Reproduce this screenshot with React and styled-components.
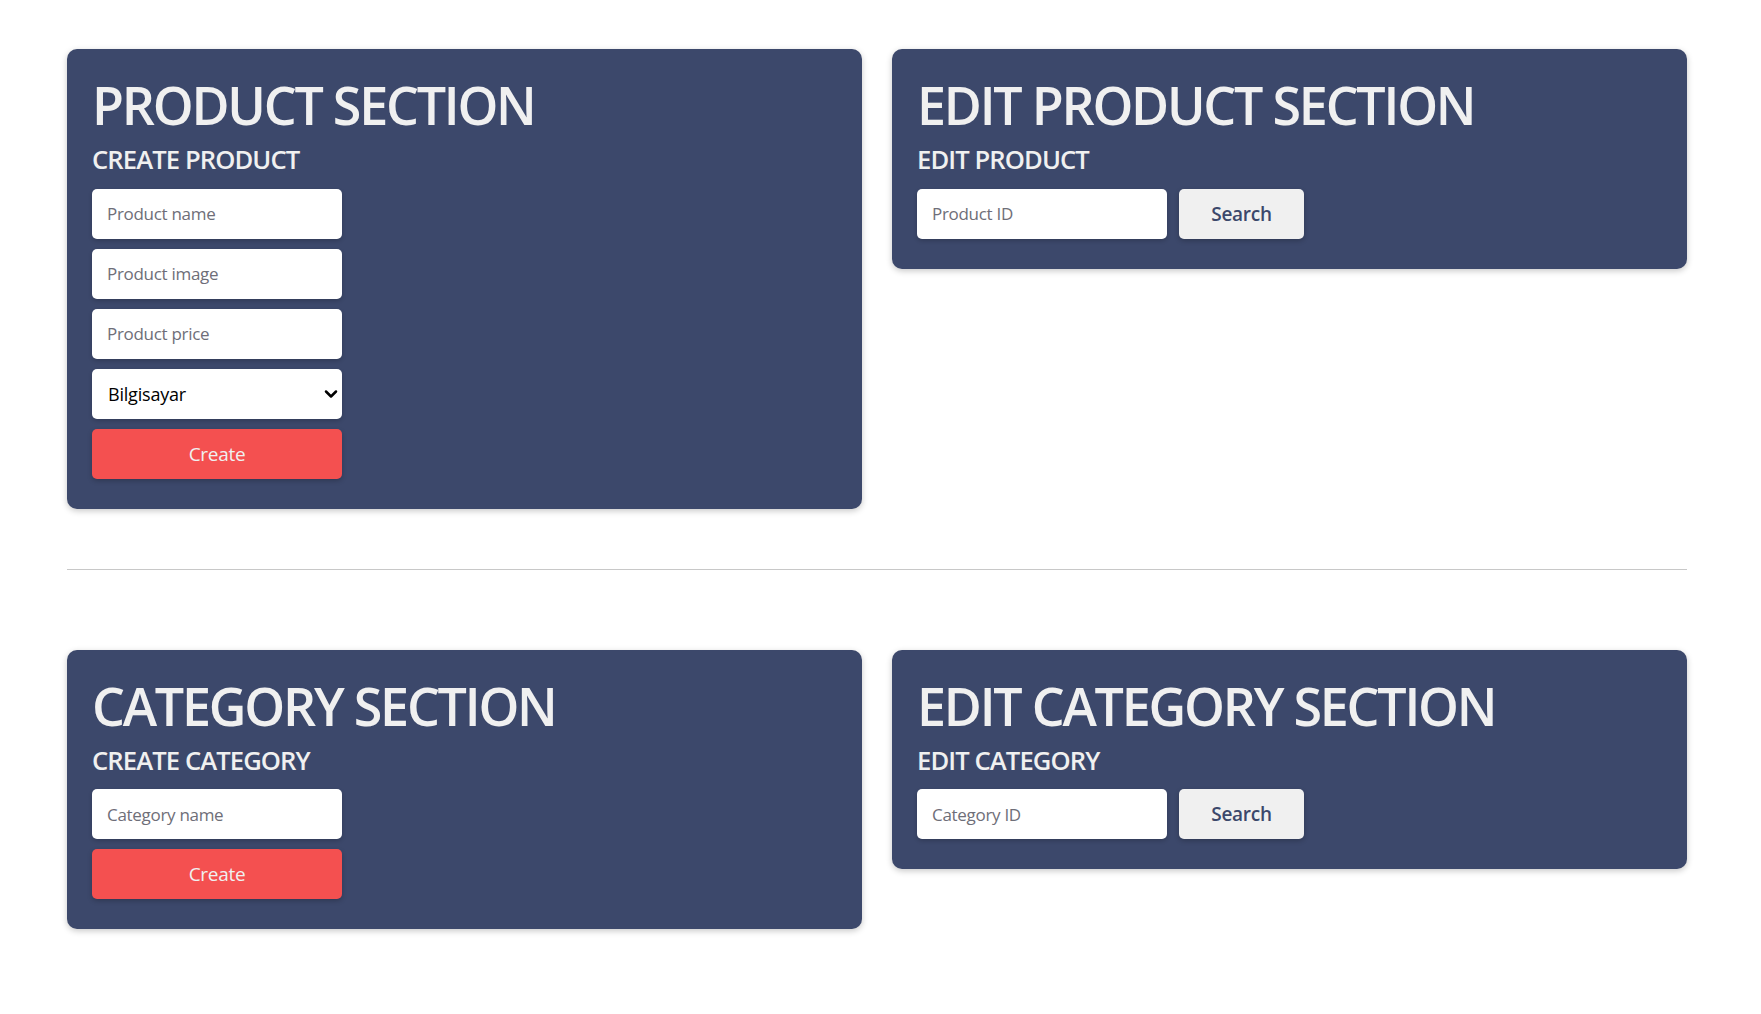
import React, { useState } from "react";
import styled, { createGlobalStyle } from "styled-components";
import { ChevronDown } from "lucide-react";

const GlobalStyle = createGlobalStyle`
  body {
    margin: 0;
    background: #ffffff;
    font-family: "Open Sans", "Noto Sans", sans-serif;
  }
`;

const Page = styled.div`
  padding: 49px 74px 60px 67px;
`;

const SectionRow = styled.div`
  display: grid;
  grid-template-columns: 1fr 1fr;
  gap: 30px;
  align-items: start;
`;

const Divider = styled.hr`
  border: none;
  border-top: 1px solid #c8c8c8;
  margin: 60px 0 80px;
`;

const Card = styled.div`
  background: #3c486b;
  border-radius: 10px;
  padding: 30px 25px 30px;
  box-shadow: 0 2px 6px rgba(0, 0, 0, 0.22);
`;

const Title = styled.h1`
  margin: 0 0 16px;
  font-size: 52px;
  line-height: 52px;
  font-weight: 600;
  letter-spacing: -0.043em;
  color: #f0f0f0;
`;

const SubTitle = styled.h2`
  margin: 0 0 16px;
  font-size: 25.6px;
  line-height: 25.6px;
  font-weight: 600;
  letter-spacing: -0.035em;
  color: #f0f0f0;
`;

const Stack = styled.div`
  display: flex;
  flex-direction: column;
  gap: 10px;
  width: 250px;
`;

const Inline = styled.div`
  display: flex;
  gap: 12px;
`;

const Input = styled.input`
  box-sizing: border-box;
  width: 250px;
  height: 50px;
  border: none;
  border-radius: 5px;
  padding: 0 15px;
  background: #ffffff;
  font-family: inherit;
  font-size: 17px;
  letter-spacing: -0.3px;
  color: #222;
  outline: none;
  box-shadow: 0 2px 4px rgba(0, 0, 0, 0.18);

  &::placeholder {
    color: #6e6e78;
  }
`;

const SelectWrap = styled.div`
  position: relative;
  width: 250px;
  height: 50px;
`;

const Select = styled.select`
  appearance: none;
  box-sizing: border-box;
  width: 100%;
  height: 100%;
  border: none;
  border-radius: 5px;
  padding: 0 30px 0 16px;
  background: #ffffff;
  font-family: inherit;
  font-size: 18px;
  letter-spacing: -0.2px;
  color: #000;
  outline: none;
  box-shadow: 0 2px 4px rgba(0, 0, 0, 0.18);
`;

const Chevron = styled(ChevronDown)`
  position: absolute;
  right: 1px;
  top: 15px;
  pointer-events: none;
  color: #000;
`;

const Button = styled.button`
  box-sizing: border-box;
  height: 50px;
  width: ${(p) => (p.$wide ? "250px" : "125px")};
  border: none;
  border-radius: 5px;
  background: ${(p) => (p.$variant === "danger" ? "#f45050" : "#f0f0f0")};
  color: ${(p) => (p.$variant === "danger" ? "#f0f0f0" : "#3c486b")};
  font-family: inherit;
  font-size: 19px;
  font-weight: ${(p) => (p.$variant === "danger" ? 400 : 600)};
  letter-spacing: -0.3px;
  cursor: pointer;
  box-shadow: 0 2px 5px rgba(0, 0, 0, 0.22);
`;

const CreateProduct = () => {
  const [category, setCategory] = useState("Bilgisayar");
  return (
    <Card>
      <Title>PRODUCT SECTION</Title>
      <SubTitle>CREATE PRODUCT</SubTitle>
      <Stack>
        <Input type="text" placeholder="Product name" />
        <Input type="text" placeholder="Product image" />
        <Input type="text" placeholder="Product price" />
        <SelectWrap>
          <Select value={category} onChange={(e) => setCategory(e.target.value)}>
            <option>Bilgisayar</option>
            <option>Telefon</option>
            <option>Tablet</option>
          </Select>
          <Chevron size={20} strokeWidth={3} />
        </SelectWrap>
        <Button $variant="danger" $wide>Create</Button>
      </Stack>
    </Card>
  );
};

const EditCard = ({ title, subtitle, placeholder }) => (
  <Card>
    <Title>{title}</Title>
    <SubTitle>{subtitle}</SubTitle>
    <Inline>
      <Input type="text" placeholder={placeholder} />
      <Button>Search</Button>
    </Inline>
  </Card>
);

const CreateCategory = () => (
  <Card>
    <Title>CATEGORY SECTION</Title>
    <SubTitle>CREATE CATEGORY</SubTitle>
    <Stack>
      <Input type="text" placeholder="Category name" />
      <Button $variant="danger" $wide>Create</Button>
    </Stack>
  </Card>
);

export default function App() {
  return (
    <>
      <GlobalStyle />
      <Page>
        <SectionRow>
          <CreateProduct />
          <EditCard title="EDIT PRODUCT SECTION" subtitle="EDIT PRODUCT" placeholder="Product ID" />
        </SectionRow>
        <Divider />
        <SectionRow>
          <CreateCategory />
          <EditCard title="EDIT CATEGORY SECTION" subtitle="EDIT CATEGORY" placeholder="Category ID" />
        </SectionRow>
      </Page>
    </>
  );
}
